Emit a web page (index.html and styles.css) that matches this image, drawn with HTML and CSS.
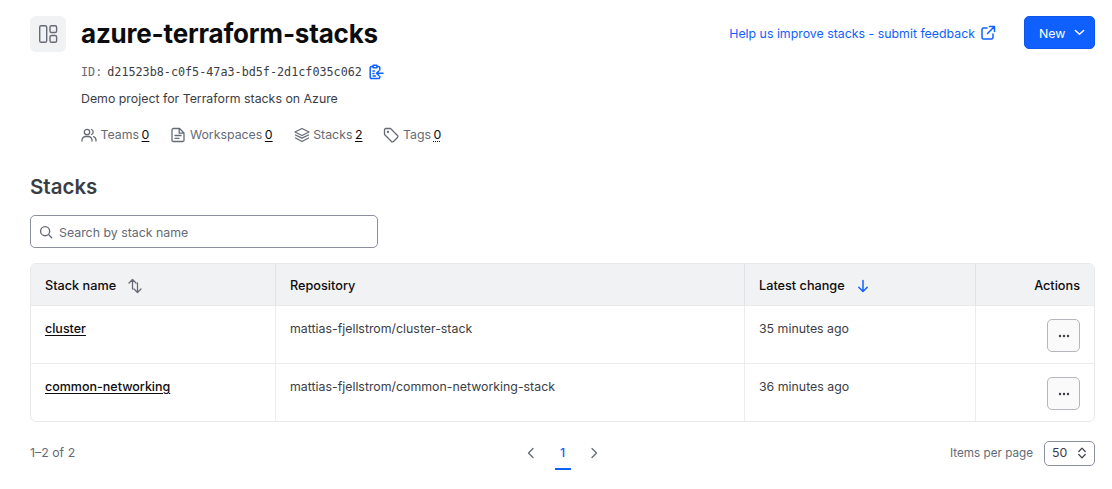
FILE: index.html
```html
<!DOCTYPE html>
<html lang="en">
<head>
<meta charset="utf-8">
<title>azure-terraform-stacks</title>
<link rel="stylesheet" href="styles.css">
</head>
<body>
<header class="top">
  <div class="tile">
    <svg class="i20" viewBox="0 0 20 20" fill="none" stroke="#656a76" stroke-width="1.4"><rect x="1.7" y="1.7" width="7" height="16.6" rx="1.6"/><rect x="12" y="1.7" width="6.6" height="6.8" rx="1.6"/><rect x="12" y="11.5" width="6.6" height="6.8" rx="1.6"/></svg>
  </div>
  <div class="head-main">
    <div class="title-row">
      <h1>azure-terraform-stacks</h1>
      <div class="head-actions">
        <a class="feedback"><span class="nudge">Help us improve stacks - submit feedback</span>
          <svg class="i16" viewBox="0 0 16 16" fill="none" stroke="#1060ff" stroke-width="1.5" stroke-linecap="round" stroke-linejoin="round"><path d="M7 3H3.5A1.5 1.5 0 0 0 2 4.5v8A1.5 1.5 0 0 0 3.5 14h8a1.5 1.5 0 0 0 1.5-1.5V9"/><path d="M9.5 1.5h5v5M14.5 1.5 7.5 8.5"/></svg>
        </a>
        <button class="new"><span class="nudge">New</span>
          <svg class="chev" viewBox="0 0 12 12" fill="none" stroke="#fff" stroke-width="1.6" stroke-linecap="round" stroke-linejoin="round"><path d="M1.500 3.800 6 8l4.500-4.200"/></svg>
        </button>
      </div>
    </div>
    <div class="id-row">
      <span class="id-label">ID:</span><span class="id-val">d21523b8-c0f5-47a3-bd5f-2d1cf035c062</span>
      <svg class="i16" viewBox="0 0 16 16" fill="none" stroke="#1060ff" stroke-width="1.5" stroke-linecap="round" stroke-linejoin="round"><path d="M5 2.5H3.500A1.300 1.300 0 0 0 2.200 3.800v9.400a1.300 1.300 0 0 0 1.300 1.300h7a1.300 1.300 0 0 0 1.300-1.300V12.500M11.800 6V3.800a1.300 1.300 0 0 0-1.300-1.300H9"/><rect x="5" y="1.200" width="4" height="2.600" rx=".6"/><path d="M15 9.200H8.500M10.800 7 8.500 9.200l2.300 2.200M5 7h1.500M5 9.500h1M5 12h2.500"/></svg>
    </div>
    <p class="desc">Demo project for Terraform stacks on Azure</p>
    <ul class="meta">
      <li><svg class="i16" viewBox="0 0 16 16" fill="none" stroke="#656a76" stroke-width="1.3" stroke-linecap="round" stroke-linejoin="round"><circle cx="6" cy="5" r="2.700"/><path d="M1 14v-.800A3.700 3.700 0 0 1 4.700 9.500h2.600A3.700 3.700 0 0 1 11 13.200v.800M10.500 2.500a2.700 2.700 0 0 1 0 5M12.500 9.700a3.700 3.700 0 0 1 2.500 3.500v.800"/></svg>Teams <u>0</u></li>
      <li><svg class="i16" viewBox="0 0 16 16" fill="none" stroke="#656a76" stroke-width="1.300" stroke-linecap="round" stroke-linejoin="round"><path d="M2 2.800A1.300 1.300 0 0 1 3.300 1.500h6.200L14 6v7.200a1.300 1.300 0 0 1-1.300 1.300H3.300A1.300 1.300 0 0 1 2 13.200zM9.200 1.500v4.700H14M5 8.500h6M5 11.300h4"/></svg>Workspaces <u>0</u></li>
      <li><svg class="i16" viewBox="0 0 16 16" fill="none" stroke="#656a76" stroke-width="1.300" stroke-linecap="round" stroke-linejoin="round"><path d="M8 1.500 15 5 8 8.500 1 5zM1.500 8 8 11.200 14.500 8M1.500 11 8 14.500 14.500 11"/></svg>Stacks <u>2</u></li>
      <li><svg class="i16" viewBox="0 0 16 16" fill="none" stroke="#656a76" stroke-width="1.300" stroke-linecap="round" stroke-linejoin="round"><path d="M1.500 2.800A1.300 1.300 0 0 1 2.800 1.500h4.700l7 7a1.400 1.400 0 0 1 0 2l-4 4a1.400 1.400 0 0 1-2 0l-7-7z"/><circle cx="5" cy="5" r=".5"/></svg>Tags <u class="dotted">0</u></li>
    </ul>
  </div>
</header>

<main>
  <h2>Stacks</h2>
  <div class="search">
    <svg class="i14" viewBox="0 0 16 16" fill="none" stroke="#656a76" stroke-width="1.600" stroke-linecap="round"><circle cx="7" cy="7" r="5.200"/><path d="m11 11 3.500 3.500"/></svg>
    <span class="placeholder">Search by stack name</span>
  </div>

  <div class="table">
    <div class="row hdr">
      <div class="cell">Stack name
        <svg class="i16 sort" viewBox="0 0 16 16" fill="none" stroke="#656a76" stroke-width="1.300" stroke-linecap="round" stroke-linejoin="round"><path d="M5.500 11V1.500M2 5l3.500-3.500L9 5M10.500 5v9.500M7 11l3.500 3.500L14 11"/></svg>
      </div>
      <div class="cell">Repository</div>
      <div class="cell">Latest change
        <svg class="i16 sort" viewBox="0 0 16 16" fill="none" stroke="#1060ff" stroke-width="1.500" stroke-linecap="round" stroke-linejoin="round"><path d="M8 2.500v11M3.800 9.300 8 13.500l4.200-4.200"/></svg>
      </div>
      <div class="cell right">Actions</div>
    </div>
    <div class="row">
      <div class="cell"><a class="name">cluster</a></div>
      <div class="cell">mattias-fjellstrom/cluster-stack</div>
      <div class="cell">35 minutes ago</div>
      <div class="cell right"><button class="more"><svg viewBox="0 0 12 4" class="dots"><circle cx="2" cy="2" r="1.200"/><circle cx="6" cy="2" r="1.200"/><circle cx="10" cy="2" r="1.200"/></svg></button></div>
    </div>
    <div class="row">
      <div class="cell"><a class="name">common-networking</a></div>
      <div class="cell">mattias-fjellstrom/common-networking-stack</div>
      <div class="cell">36 minutes ago</div>
      <div class="cell right"><button class="more"><svg viewBox="0 0 12 4" class="dots"><circle cx="2" cy="2" r="1.200"/><circle cx="6" cy="2" r="1.200"/><circle cx="10" cy="2" r="1.200"/></svg></button></div>
    </div>
  </div>

  <footer class="pager">
    <span class="count">1–2 of 2</span>
    <nav class="pages">
      <svg class="i12" viewBox="0 0 12 12" fill="none" stroke="#656a76" stroke-width="1.300" stroke-linecap="round" stroke-linejoin="round"><path d="M8 1.500 3.500 6 8 10.500"/></svg>
      <span class="page">1</span>
      <svg class="i12" viewBox="0 0 12 12" fill="none" stroke="#656a76" stroke-width="1.300" stroke-linecap="round" stroke-linejoin="round"><path d="M4 1.500 8.500 6 4 10.500"/></svg>
    </nav>
    <div class="per">
      <span class="per-label">Items per page</span>
      <div class="select">50
        <svg class="i12" viewBox="0 0 12 12" fill="none" stroke="#3b3d45" stroke-width="1.200" stroke-linecap="round" stroke-linejoin="round"><path d="M2.800 4.500 6 1.200l3.200 3.300M2.800 7.500 6 10.800l3.200-3.300"/></svg>
      </div>
    </div>
  </footer>
</main>
</body>
</html>
```

FILE: styles.css
```css
* { box-sizing: border-box; }
html, body { margin: 0; padding: 0; }
body {
  width: 1112px;
  height: 489px;
  overflow: hidden;
  padding: 16px 17px 0 30px;
  background: #fff;
  font-family: Inter, "Liberation Sans", sans-serif;
  font-size: 12.35px;
  line-height: 18px;
  color: #3b3d45;
}
svg { display: block; flex: none; }
.i20 { width: 20px; height: 20px; }
.i16 { width: 16px; height: 16px; }
.i14 { width: 14px; height: 14px; }
.i12 { width: 12px; height: 12px; }
.chev { width: 11px; height: 11px; }

.top { display: flex; gap: 15px; }
.tile {
  width: 36px; height: 36px; flex: none;
  display: flex; align-items: center; justify-content: center;
  background: #f1f2f3; border-radius: 6px;
}
.head-main { flex: 1; min-width: 0; }
.title-row { display: flex; justify-content: space-between; align-items: flex-start; height: 34px; }
h1 {
  margin: 0; font-size: 26px; line-height: 36px; font-weight: 700;
  color: #0c0c0e; letter-spacing: -.2px;
}
.head-actions { display: flex; align-items: center; gap: 28px; }
.nudge { padding-top: 2px; }
.feedback { display: flex; align-items: center; gap: 5px; color: #1060ff; }
.new {
  display: flex; align-items: center; gap: 9px;
  width: 71px; height: 33px; padding: 0 0 0 14px;
  background: #1060ff; color: #fff; border: 1px solid #0c56e9; border-radius: 5px;
  font: inherit;
}

.id-row { display: flex; align-items: center; margin-top: 13px; height: 18px; }
.id-label, .id-val { font-family: "DejaVu Sans Mono", monospace; font-size: 11.75px; }
.id-label { color: #656a76; margin-right: 5px; }
.id-val { margin-right: 6px; }
.desc { margin: 9px 0 0; height: 18px; }
.meta { list-style: none; margin: 18px 0 0; padding: 0; display: flex; gap: 21px; color: #656a76; }
.meta li { display: flex; align-items: center; }
.meta li svg { margin-right: 3.500px; }
.meta u { color: #0c0c0e; margin-left: 2.500px; text-underline-offset: 2px; }
.meta u.dotted { text-decoration-style: dotted; }

h2 { margin: 29px 0 0; font-size: 20.500px; line-height: 28px; font-weight: 600; color: #3b3d45; }
.search {
  display: flex; align-items: center; gap: 6px;
  width: 348px; height: 33px; margin-top: 14px; padding: 0 8px;
  border: 1px solid #8c909c; border-radius: 5px; color: #656a76;
}
.placeholder { padding-top: 2px; }
.table {
  margin-top: 15px; height: 159px;
  border: 1px solid #e8e9eb; border-radius: 6px; overflow: hidden;
}
.row { display: grid; grid-template-columns: 244px 469px 231px 1fr; height: 58px; border-top: 1px solid #ebecee; }
.row.hdr {
  height: 42px; border-top: 0; border-bottom: 1px solid #e8e9eb;
  background: #f1f2f3; color: #0c0c0e; font-weight: 500; font-size: 12.7px;
}
.row.hdr + .row { border-top: 0; height: 57px; }
.cell { display: flex; align-items: flex-start; padding: 14px 14px 13px; border-left: 1px solid #ebecee; }
.cell:first-child { border-left: 0; }
.cell.right { justify-content: flex-end; padding-top: 13px; }
.hdr .cell, .hdr .cell.right { align-items: center; padding-top: 2px; padding-bottom: 0; border-left-color: #e1e2e5; }
.sort { margin-left: 10.500px; }
.name { color: #0c0c0e; font-weight: 500; font-size: 12.5px; text-decoration: underline; text-underline-offset: 2px; }
.more {
  width: 33px; height: 33px; padding: 0;
  display: flex; align-items: center; justify-content: center;
  background: #fafafa; border: 1px solid #b3b6bd; border-radius: 5px;
}
.dots { width: 12px; height: 4px; fill: #3b3d45; }

.pager {
  display: grid; grid-template-columns: 1fr auto 1fr; align-items: center;
  margin-top: 18px; height: 26px; color: #656a76;
}
.pages { display: flex; align-items: center; gap: 13.500px; height: 26px; }
.page {
  position: relative; width: 16px; text-align: center; color: #1060ff; font-weight: 500;
  margin: 0 4px;
}
.page::after {
  content: ""; position: absolute; left: 0; right: 0; bottom: -8px; height: 2px; background: #1060ff;
}
.per { display: flex; justify-content: flex-end; align-items: center; gap: 11px; }
.per-label { font-size: 11.7px; }
.select {
  display: flex; align-items: center; justify-content: space-between;
  width: 51px; height: 25px; padding: 0 6px 0 7px;
  border: 1px solid #8c909c; border-radius: 5px; color: #3b3d45;
}
```
